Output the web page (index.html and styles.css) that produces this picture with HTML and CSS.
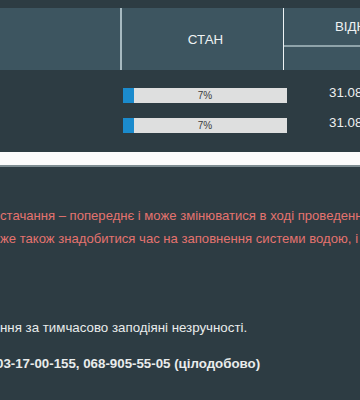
FILE: index.html
```html
<!DOCTYPE html>
<html lang="uk">
<head>
    <meta charset="UTF-8">
    <meta name="viewport" content="width=device-width, initial-scale=1.0">
    <title>Відключення водопостачання</title>
    <link rel="stylesheet" href="styles.css">
</head>
<body>
    <div class="page">
        <div class="table">
            <div class="thead">
                <div class="th th-first"></div>
                <div class="th th-state">СТАН</div>
                <div class="th th-group">
                    <div class="th-group-title">ВІДНОВЛЕННЯ</div>
                    <div class="th-group-sub"></div>
                </div>
            </div>
            <div class="tbody">
                <div class="row">
                    <div class="cell"></div>
                    <div class="cell">
                        <div class="progress">
                            <div class="progress-fill" style="width: 7%"></div>
                            <span class="progress-label">7%</span>
                        </div>
                    </div>
                    <div class="cell cell-date">31.08.2023</div>
                </div>
                <div class="row">
                    <div class="cell"></div>
                    <div class="cell">
                        <div class="progress">
                            <div class="progress-fill" style="width: 7%"></div>
                            <span class="progress-label">7%</span>
                        </div>
                    </div>
                    <div class="cell cell-date">31.08.2023</div>
                </div>
            </div>
            <div class="tfoot"></div>
        </div>

        <div class="notice">
            <p class="warn">стачання – попереднє і може змінюватися в ході проведення робіт.</p>
            <p class="warn">же також знадобитися час на заповнення системи водою, і тиск відновлюватиметься поступово.</p>
        </div>

        <div class="info">
            <p class="apology">ння за тимчасово заподіяні незручності.</p>
            <p class="phones">03-17-00-155, 068-905-55-05 (цілодобово)</p>
        </div>
    </div>
</body>
</html>
```

FILE: styles.css
```css
html, body {
    margin: 0;
    padding: 0;
    overflow: hidden;
}
body {
    font-family: "Liberation Sans", Arial, sans-serif;
    background-color: #2d3c43;
    color: #e9ecec;
}
.page {
    width: 760px;
    padding-top: 8px;
}
.thead {
    display: grid;
    grid-template-columns: 122px 162px 1fr;
    height: 62px;
    background-color: #3d5560;
    font-size: 13.3px;
    color: #eef2f3;
}
.th-first {
    border-right: 2px solid #a7bac1;
}
.th-state {
    display: flex;
    align-items: center;
    justify-content: center;
    padding-left: 6px;
    padding-top: 1px;
    border-right: 1px solid #eef3f5;
}
.th-group {
    display: flex;
    flex-direction: column;
}
.th-group-title {
    height: 37px;
    border-bottom: 2px solid #8fa3aa;
    padding-left: 51px;
    line-height: 37px;
}
.tbody {
    padding-top: 18px;
}
.row {
    display: grid;
    grid-template-columns: 123px 164px 1fr;
    height: 30px;
}
.progress {
    position: relative;
    height: 15px;
    background-color: #dedfdf;
}
.progress-fill {
    height: 100%;
    background-color: #1b8bcd;
}
.progress-label {
    position: absolute;
    top: 0;
    left: 0;
    right: 0;
    text-align: center;
    font-size: 10px;
    line-height: 15px;
    color: #3a3a3a;
}
.cell-date {
    padding-left: 42px;
    font-size: 13.3px;
    line-height: 10px;
    color: #eef0f0;
}
.tfoot {
    margin-top: 4px;
    height: 13px;
    background-color: #fbfbfb;
    border-bottom: 2px solid #7e8d92;
}
.notice {
    padding-top: 37px;
}
.notice p,
.info p {
    margin: 0;
    white-space: nowrap;
    font-size: 13.3px;
    line-height: 23px;
}
.notice p {
    font-size: 13.1px;
}
.warn {
    color: #e4736f;
}
.info {
    padding-top: 66px;
}
.phones {
    margin-top: 13px !important;
    margin-left: -4px !important;
    font-weight: bold;
}
```
